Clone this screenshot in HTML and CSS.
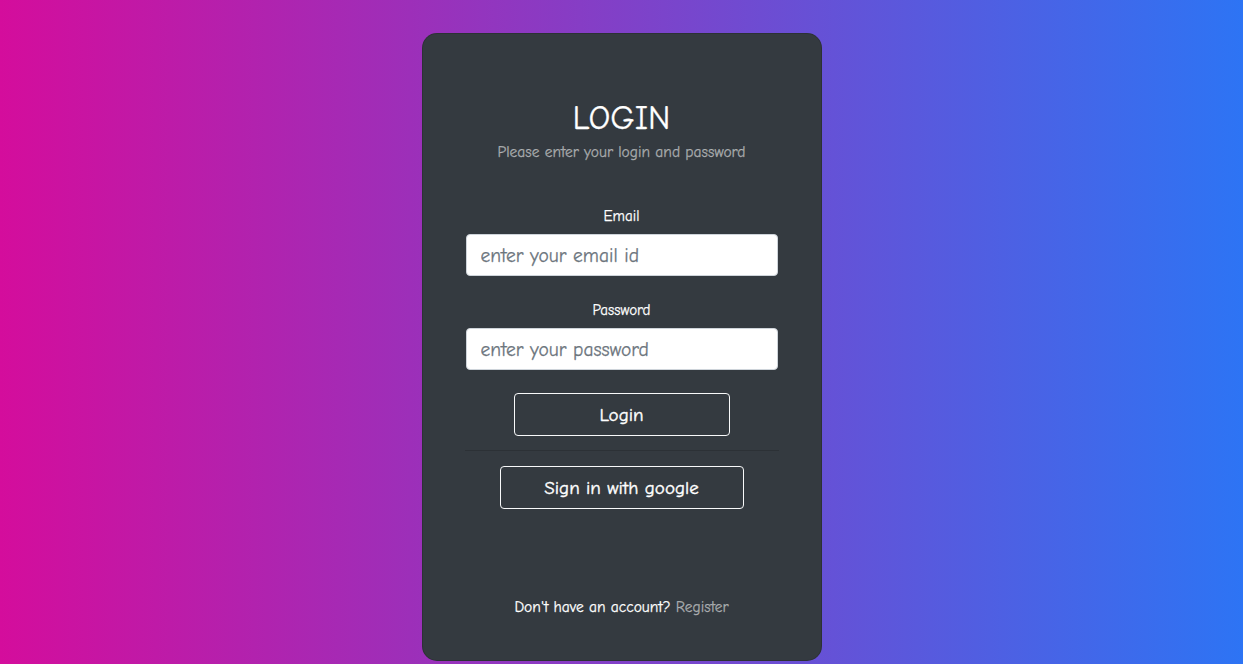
FILE: index.html
```html
<!DOCTYPE html>
<html lang="en">
<head>
<meta charset="utf-8">
<title>Login</title>
<link rel="stylesheet" href="styles.css">
</head>
<body>
<section class="page">
  <div class="card">
    <div class="head">
      <h2 class="title">LOGIN</h2>
      <p class="subtitle">Please enter your login and password</p>
    </div>
    <form class="form">
      <label class="label" for="email">Email</label>
      <input class="field" id="email" type="email" placeholder="enter your email id">
      <label class="label" for="pw">Password</label>
      <input class="field" id="pw" type="password" placeholder="enter your password">
      <button class="btn btn-login" type="button">Login</button>
      <hr class="divider">
      <button class="btn btn-google" type="button">Sign in with google</button>
    </form>
    <p class="foot">Don't have an account? <a class="link" href="#">Register</a></p>
  </div>
</section>
</body>
</html>
```
FILE: styles.css
```css
* { box-sizing: border-box; }
html, body { margin: 0; height: 100%; }
body {
  font-family: "Comic Sans MS", "Comic Neue", cursive;
  background: linear-gradient(to right, #d40d9c, #2d74f4);
  color: #fff;
  -webkit-text-stroke: 0.25px currentColor;
}
.page {
  height: 664px;
  display: flex;
  justify-content: center;
  align-items: flex-start;
  padding-top: 33px;
}
.card {
  width: 400px;
  height: 628px;
  background: #343a40;
  border: 1px solid rgba(0,0,0,.15);
  border-radius: 15px;
  padding: 0 44px;
  display: flex;
  flex-direction: column;
  align-items: center;
}
.head { text-align: center; margin-top: 65px; }
.title {
  margin: 0;
  font-size: 34px;
  font-weight: 400;
  line-height: 38px;
}
.subtitle {
  margin: 5px 0 0;
  font-size: 15.5px;
  line-height: 20px;
  color: rgba(255,255,255,.5);
}
.form {
  width: 100%;
  display: flex;
  flex-direction: column;
  align-items: center;
  margin-top: 44px;
}
.label {
  font-size: 15px;
  line-height: 20px;
  margin-bottom: 8px;
}
.field {
  width: 312px;
  height: 42px;
  border: 1px solid #ced4da;
  border-radius: 4px;
  padding: 0 14px;
  font-family: inherit;
  font-size: 19.5px;
  color: #495057;
  margin-bottom: 24px;
}
.field::placeholder { color: #6c757d; }
.btn {
  height: 43px;
  background: transparent;
  border: 1px solid #f8f9fa;
  border-radius: 4px;
  color: #fff;
  font-family: inherit;
  font-size: 19px;
  -webkit-text-stroke: 0.4px #fff;
}
.btn-login { width: 216px; margin-top: -1px; }
.divider {
  width: 314px;
  border: 0;
  border-top: 1px solid rgba(0,0,0,.15);
  margin: 14px 0 15px;
}
.btn-google { width: 244px; }
.foot {
  margin: auto 0 43px;
  font-size: 15.5px;
  line-height: 20px;
}
.link { color: rgba(255,255,255,.5); text-decoration: none; }
```
